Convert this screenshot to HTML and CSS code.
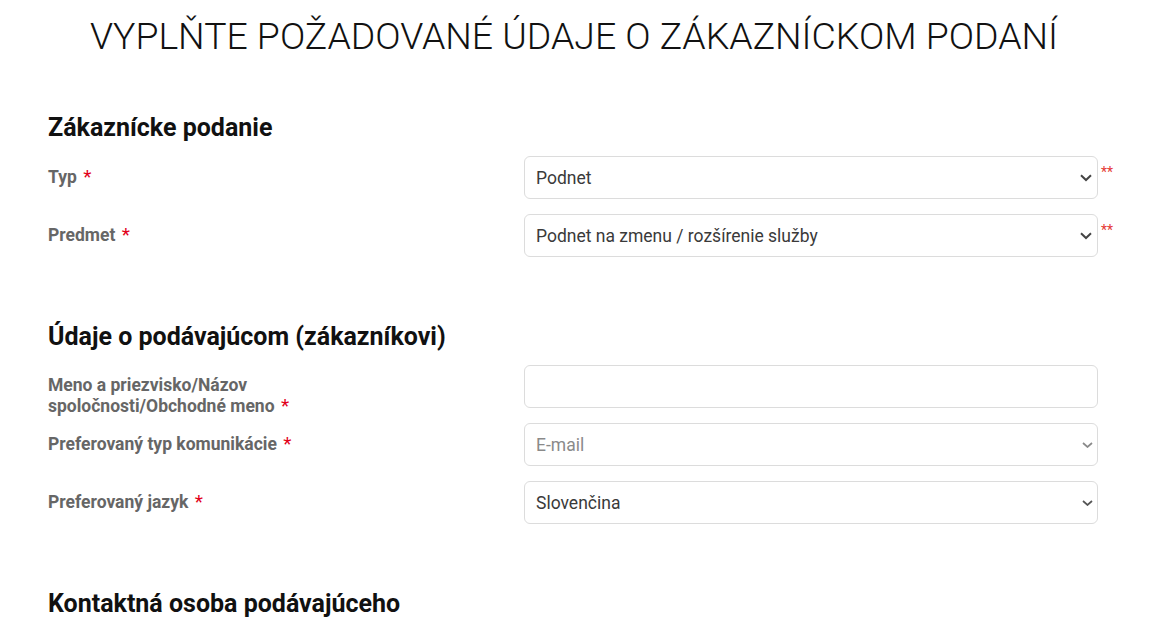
FILE: index.html
```html
<!DOCTYPE html>
<html lang="sk">
<head>
<meta charset="utf-8">
<title>Zákaznícke podanie</title>
<link rel="stylesheet" href="styles.css">
</head>
<body>
<main class="page">
<h1 class="title">VYPLŇTE POŽADOVANÉ ÚDAJE O ZÁKAZNÍCKOM PODANÍ</h1>

<section class="group group-first">
  <h2 class="group-title">Zákaznícke podanie</h2>
  <div class="row">
    <label class="row-label">Typ <span class="req">*</span></label>
    <div class="field">
      <select class="control"><option>Podnet</option></select>
      <svg class="chevron chevron-bold" viewBox="0 0 12 8" width="12" height="8"><path d="M1 1.2 L6 6 L11 1.2" fill="none" stroke="#444" stroke-width="2"/></svg>
    </div>
    <span class="req-note">**</span>
  </div>
  <div class="row">
    <label class="row-label">Predmet <span class="req">*</span></label>
    <div class="field">
      <select class="control"><option>Podnet na zmenu / rozšírenie služby</option></select>
      <svg class="chevron chevron-bold" viewBox="0 0 12 8" width="12" height="8"><path d="M1 1.2 L6 6 L11 1.2" fill="none" stroke="#444" stroke-width="2"/></svg>
    </div>
    <span class="req-note">**</span>
  </div>
</section>

<section class="group">
  <h2 class="group-title">Údaje o podávajúcom (zákazníkovi)</h2>
  <div class="row">
    <label class="row-label">Meno a priezvisko/Názov<br>spoločnosti/Obchodné meno <span class="req">*</span></label>
    <div class="field">
      <input class="control" type="text">
    </div>
  </div>
  <div class="row">
    <label class="row-label">Preferovaný typ komunikácie <span class="req">*</span></label>
    <div class="field">
      <select class="control control-muted"><option>E-mail</option></select>
      <svg class="chevron chevron-thin" viewBox="0 0 11 6" width="11" height="6"><path d="M1 1 L5.5 5 L10 1" fill="none" stroke="#8a8a8a" stroke-width="1.7"/></svg>
    </div>
  </div>
  <div class="row">
    <label class="row-label">Preferovaný jazyk <span class="req">*</span></label>
    <div class="field">
      <select class="control"><option>Slovenčina</option></select>
      <svg class="chevron chevron-thin" viewBox="0 0 11 6" width="11" height="6"><path d="M1 1 L5.5 5 L10 1" fill="none" stroke="#555" stroke-width="1.7"/></svg>
    </div>
  </div>
</section>

<section class="group">
  <h2 class="group-title">Kontaktná osoba podávajúceho</h2>
</section>
</main>
</body>
</html>
```

FILE: styles.css
```css
html, body {
  margin: 0;
  padding: 0;
  background: #fff;
}

body {
  font-family: Roboto, "Liberation Sans", Arial, sans-serif;
  color: #111;
}

.page {
  width: 1052px;
  padding-left: 48px;
}

.title {
  margin: 13px 0 0;
  font-size: 37.4px;
  line-height: 46px;
  font-weight: 300;
  text-align: center;
  color: #111;
}

.group {
  margin-top: 66px;
}

.group-first {
  margin-top: 55px;
}

.group-title {
  margin: 0 0 14px;
  font-size: 25px;
  line-height: 28px;
  font-weight: 700;
  color: #111;
}

.row {
  display: grid;
  grid-template-columns: 476px 574px auto;
  grid-template-rows: 43px;
  align-items: start;
  margin-bottom: 15px;
}

.row-label {
  padding-top: 11px;
  font-size: 17.5px;
  line-height: 19.5px;
  font-weight: 700;
  color: #666;
  white-space: nowrap;
}

.req {
  color: #e2001a;
  font-size: 19px;
  font-weight: 400;
  margin-left: 2px;
}

.field {
  position: relative;
}

.control {
  display: block;
  box-sizing: border-box;
  width: 574px;
  height: 43px;
  margin: 0;
  padding: 0 11px;
  border: 1px solid #dcdcdc;
  border-radius: 6px;
  background: #fff;
  font-family: Roboto, "Liberation Sans", Arial, sans-serif;
  font-size: 17.5px;
  color: #3a3a3a;
  -webkit-appearance: none;
  appearance: none;
  outline: none;
}

.control-muted {
  color: #8a8a8a;
}

.chevron {
  position: absolute;
  pointer-events: none;
}

.chevron-bold {
  right: 6px;
  top: 18px;
}

.chevron-thin {
  right: 5px;
  top: 19px;
}

.req-note {
  padding-top: 8px;
  margin-left: 3px;
  font-size: 14px;
  line-height: 16px;
  color: #e53935;
}
```
